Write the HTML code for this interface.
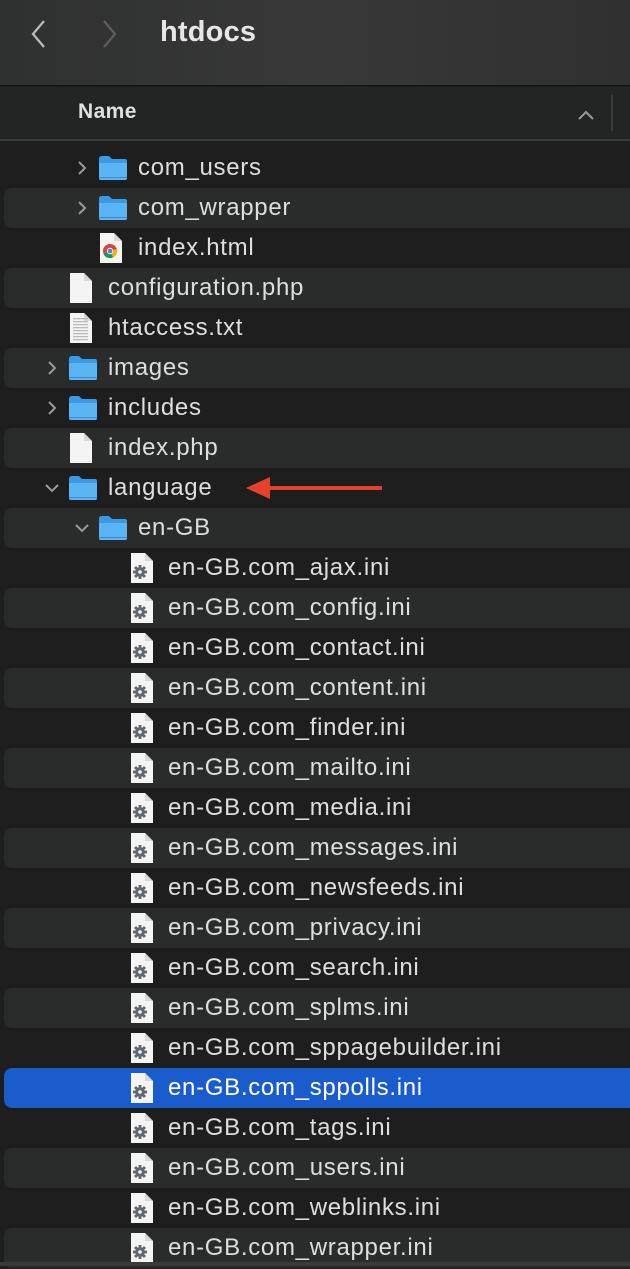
<!DOCTYPE html>
<html><head><meta charset="utf-8"><style>
*{margin:0;padding:0;box-sizing:border-box}
body{width:630px;height:1266px;overflow:hidden;background:#1e1e1e;font-family:"Liberation Sans",sans-serif;position:relative}
.title{position:absolute;left:0;top:0;width:630px;height:86px;background:linear-gradient(90deg,#2f3030,#383838 50%,#303030);border-bottom:1px solid #111}
.title .t{position:absolute;left:160px;top:16px;font-size:29px;font-weight:bold;color:#e6e6e6;letter-spacing:0.2px}
.hdr{position:absolute;left:0;top:87px;width:630px;height:54px;background:#232424;border-bottom:2px solid #3a3a3a}
.hdr .n{position:absolute;left:78px;top:13px;font-size:21px;font-weight:bold;color:#e0e0e0;letter-spacing:0.4px}
.hdr .sep{position:absolute;left:611px;top:8px;width:2px;height:36px;background:#3c3c3c}
.row{position:absolute;left:4px;width:640px;height:40px;border-radius:8px}
.row.l{background:#2a2b2b}
.row.sel{background:#1a5ccc}
.tx{position:absolute;font-size:24px;color:#dedede;white-space:nowrap;letter-spacing:0.7px}
.ic{position:absolute}
</style></head><body>
<div class="title">
<svg style="position:absolute;left:28px;top:18px" width="22" height="32"><path d="M16 3 L5 16 L16 29" stroke="#bdbdbd" stroke-width="2.2" fill="none"/></svg>
<svg style="position:absolute;left:98px;top:18px" width="22" height="32"><path d="M6 3 L17 16 L6 29" stroke="#5e5e5e" stroke-width="2.2" fill="none"/></svg>
<div class="t">htdocs</div>
</div>
<div class="hdr"><div class="n">Name</div>
<svg style="position:absolute;left:577px;top:22px" width="18" height="12"><path d="M2 10 L9 3 L16 10" stroke="#9a9a9a" stroke-width="2" fill="none"/></svg>
<div class="sep"></div></div>
<div id="rows"></div>
<div style="position:absolute;left:0;top:1262px;width:630px;height:4px;background:#3a3a3a"></div>
<svg style="position:absolute;left:244px;top:474px" width="140" height="28"><path d="M2 14 L26 3 L26 25 Z" fill="#e8412c"/><rect x="24" y="12" width="114" height="4" fill="#e8412c"/></svg>
<script>
const folder='<svg width="30" height="26" viewBox="0 0 30 26"><path d="M1 4 Q1 1 4 1 H11 L14 4 H27 Q29 4 29 6 V23 Q29 25 27 25 H3 Q1 25 1 23Z" fill="#3b9ae6"/><path d="M1 8 H29 V23 Q29 25 27 25 H3 Q1 25 1 23Z" fill="#5bb5f5"/><rect x="1" y="22" width="28" height="1" fill="#3a8fd4"/></svg>';
const doc=(inner)=>'<svg width="24" height="32" viewBox="0 0 24 32"><path d="M1 1 H15 L23 9 V31 H1Z" fill="#f4f4f4"/><path d="M15 1 V9 H23" fill="#d8d8d8"/>'+inner+'</svg>';
let teeth='';for(let a=0;a<360;a+=45)teeth+='<rect x="8.6" y="13" width="2.8" height="4" fill="#5f6870" transform="rotate('+a+' 10 20)"/>';
const gear=teeth+'<circle cx="10" cy="20" r="4.8" fill="#5f6870"/><circle cx="10" cy="20" r="1.8" fill="#f4f4f4"/>';
const txt='<g fill="#bbb">'+[6,9,12,15,18,21,24,27].map(y=>'<rect x="4" y="'+y+'" width="15" height="1.3"/>').join('')+'</g>';
const chrome='<circle cx="11" cy="19" r="7" fill="#db4437"/><path d="M11 19 L4.5 22 A7 7 0 0 0 14 25.3Z" fill="#0f9d58"/><path d="M11 19 L14 25.3 A7 7 0 0 0 17.9 17Z" fill="#f4b400"/><circle cx="11" cy="19" r="3.2" fill="#fff"/><circle cx="11" cy="19" r="2.4" fill="#4285f4"/>';
const items=[
[1,'f','com_users',1],[1,'f','com_wrapper',1],[1,'c','index.html'],[0,'d','configuration.php'],[0,'t','htaccess.txt'],
[0,'f','images',1],[0,'f','includes',1],[0,'d','index.php'],[0,'f','language',2],[1,'f','en-GB',2]];
['ajax','config','contact','content','finder','mailto','media','messages','newsfeeds','privacy','search','splms','sppagebuilder','sppolls','tags','users','weblinks','wrapper'].forEach(n=>items.push([2,'g','en-GB.com_'+n+'.ini']));
let h='';
items.forEach((it,i)=>{
 const y=148+i*40;const [lv,ty,name,ch]=it;
 let cls=i%2?'row l':'row';if(name==='en-GB.com_sppolls.ini')cls='row sel';
 h+='<div class="'+cls+'" style="top:'+y+'px"></div>';
 const ix=lv==0?68:lv==1?98:130;const tx=lv==2?168:ix+40;
 if(ch){const cx=ix-24;h+='<svg style="position:absolute;left:'+cx+'px;top:'+(y+12)+'px" width="16" height="16">'+(ch==1?'<path d="M5 2 L11 8 L5 14" stroke="#9a9a9a" stroke-width="2" fill="none"/>':'<path d="M2 5 L8 11 L14 5" stroke="#9a9a9a" stroke-width="2" fill="none"/>')+'</svg>';}
 let icon;
 if(ty=='f'){icon='<div class="ic" style="left:'+ix+'px;top:'+(y+7)+'px">'+folder+'</div>';}
 else{const inner=ty=='g'?gear:ty=='t'?txt:ty=='c'?chrome:'';const dx=lv==2?130:(ix+1);icon='<div class="ic" style="left:'+dx+'px;top:'+(y+4)+'px">'+doc(inner)+'</div>';}
 h+=icon+'<div class="tx" style="left:'+tx+'px;top:'+(y+6)+'px;color:'+(cls=='row sel'?'#fff':'#dedede')+'">'+name+'</div>';
});
document.getElementById('rows').innerHTML=h;
</script>
</body></html>
